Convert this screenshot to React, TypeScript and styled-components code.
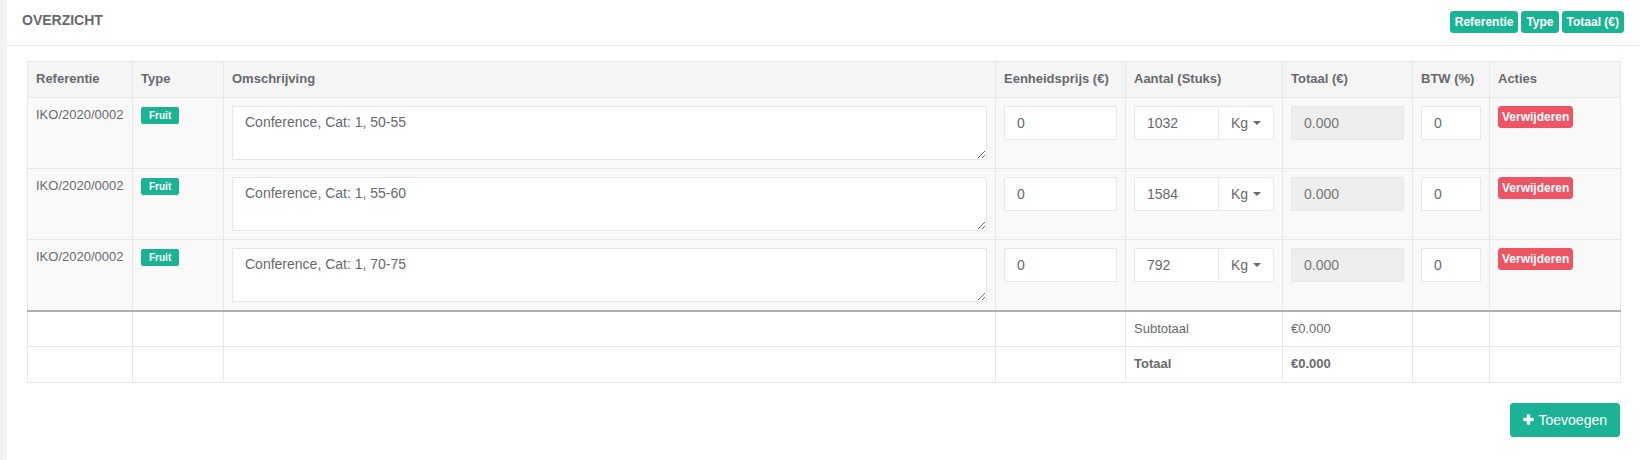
import { FC } from 'react';
import styled, { createGlobalStyle } from 'styled-components';

const GlobalStyle = createGlobalStyle`
	html, body {
		margin: 0;
		padding: 0;
		background: #f3f3f4;
	}

	body {
		font-family: 'Liberation Sans', Arial, Helvetica, sans-serif;
		font-size: 13px;
		line-height: 1.42857;
		color: #676a6c;
	}

	* {
		box-sizing: border-box;
	}
`;

const Page = styled.div`
	padding-left: 7px;
	min-height: 460px;
`;

const Panel = styled.section`
	background: #fff;
	min-height: 460px;
`;

const PanelTitle = styled.header`
	display: flex;
	align-items: center;
	justify-content: space-between;
	height: 46px;
	padding: 0 16px 1px 15px;
	border-bottom: 1px solid #e7eaec;

	h5 {
		margin: 0 0 2px;
		font-size: 14px;
		font-weight: bold;
		text-transform: uppercase;
		color: #676a6c;
	}
`;

const Tools = styled.div`
	display: flex;
	gap: 3px;
`;

const Button = styled.button<{ $variant?: 'primary' | 'danger'; $size?: 'xs' | 'md' }>`
	display: inline-flex;
	align-items: center;
	gap: 5px;
	border: 1px solid ${({ $variant }) => ($variant === 'danger' ? '#ed5565' : '#1ab394')};
	background: ${({ $variant }) => ($variant === 'danger' ? '#ed5565' : '#1ab394')};
	color: #fff;
	border-radius: 3px;
	font-family: inherit;
	cursor: pointer;
	font-size: ${({ $size }) => ($size === 'md' ? '14px' : '12px')};
	font-weight: ${({ $size }) => ($size === 'md' ? 'normal' : 'bold')};
	line-height: ${({ $size }) => ($size === 'md' ? '20px' : '18px')};
	padding: ${({ $size, $variant }) =>
		$size === 'md' ? '6px 12px' : $variant === 'danger' ? '1px 3px' : '1px 4px'};
`;

const Content = styled.div`
	padding: 15px 20px 20px;
`;

const Table = styled.table`
	width: 100%;
	border-collapse: collapse;
	table-layout: fixed;
	margin-bottom: 20px;

	th,
	td {
		border: 1px solid #e7e7e7;
		padding: 8px;
		text-align: left;
		vertical-align: top;
	}

	th {
		background: #f5f5f6;
		font-weight: bold;
	}

	tbody td {
		background: #f9f9f9;
	}

	tfoot td {
		background: #fff;
	}

	tfoot tr:first-child td {
		border-top: 2px solid #aeb0b2;
	}
`;

const Col = styled.col<{ $w: number }>`
	width: ${({ $w }) => $w}px;
`;

const Label = styled.span`
	display: inline-block;
	background: #1ab394;
	color: #fff;
	font-size: 10px;
	font-weight: bold;
	line-height: 11px;
	padding: 3px 8px;
	border-radius: 2px;
	margin-top: 1px;
`;

const TextArea = styled.textarea`
	display: block;
	width: 100%;
	height: 54px;
	padding: 6px 12px;
	border: 1px solid #e5e6e7;
	border-radius: 1px;
	font-family: inherit;
	font-size: 14px;
	line-height: 1.42857;
	color: #676a6c;
	background: #fff;
	outline: none;
`;

const Input = styled.input`
	display: block;
	width: 100%;
	height: 34px;
	padding: 6px 12px;
	border: 1px solid #e5e6e7;
	border-radius: 1px;
	font-family: inherit;
	font-size: 14px;
	color: #676a6c;
	background: #fff;
	outline: none;

	&:disabled {
		background: #eee;
		color: #777;
	}
`;

const InputGroup = styled.div`
	display: flex;

	input {
		flex: 1;
		min-width: 0;
	}
`;

const Addon = styled.button`
	display: flex;
	align-items: center;
	gap: 5px;
	height: 34px;
	padding: 6px 12px;
	border: 1px solid #e7eaec;
	border-left: none;
	border-radius: 0 3px 3px 0;
	background: #fff;
	font-family: inherit;
	font-size: 14px;
	color: #676a6c;
`;

const Caret = styled.span`
	width: 0;
	height: 0;
	border-top: 4px solid #676a6c;
	border-left: 4px solid transparent;
	border-right: 4px solid transparent;
`;

const Actions = styled.div`
	display: flex;
	justify-content: flex-end;

	button {
		gap: 4px;
	}
`;

const PlusIcon: FC = () => (
	<svg width="11" height="11" viewBox="0 0 11 11" aria-hidden="true">
		<rect x="3.8" y="0.3" width="3.4" height="10.4" fill="#fff" />
		<rect x="0.3" y="3.8" width="10.4" height="3.4" fill="#fff" />
	</svg>
);

const rows = [
	{ ref: 'IKO/2020/0002', desc: 'Conference, Cat: 1, 50-55', qty: '1032' },
	{ ref: 'IKO/2020/0002', desc: 'Conference, Cat: 1, 55-60', qty: '1584' },
	{ ref: 'IKO/2020/0002', desc: 'Conference, Cat: 1, 70-75', qty: '792' },
];

const widths = [105, 91, 772, 130, 157, 130, 77, 131];

const App: FC = () => {
	return (
		<>
			<GlobalStyle />
			<Page>
				<Panel>
					<PanelTitle>
						<h5>Overzicht</h5>
						<Tools>
							<Button $variant="primary">Referentie</Button>
							<Button $variant="primary">Type</Button>
							<Button $variant="primary">Totaal (€)</Button>
						</Tools>
					</PanelTitle>

					<Content>
						<Table>
							<colgroup>
								{widths.map((w, i) => (
									<Col key={i} $w={w} />
								))}
							</colgroup>
							<thead>
								<tr>
									<th>Referentie</th>
									<th>Type</th>
									<th>Omschrijving</th>
									<th>Eenheidsprijs (€)</th>
									<th>Aantal (Stuks)</th>
									<th>Totaal (€)</th>
									<th>BTW (%)</th>
									<th>Acties</th>
								</tr>
							</thead>
							<tbody>
								{rows.map((row, i) => (
									<tr key={i}>
										<td>{row.ref}</td>
										<td>
											<Label>Fruit</Label>
										</td>
										<td>
											<TextArea rows={2} defaultValue={row.desc} />
										</td>
										<td>
											<Input defaultValue="0" />
										</td>
										<td>
											<InputGroup>
												<Input defaultValue={row.qty} />
												<Addon>
													Kg <Caret />
												</Addon>
											</InputGroup>
										</td>
										<td>
											<Input disabled value="0.000" readOnly />
										</td>
										<td>
											<Input defaultValue="0" />
										</td>
										<td>
											<Button $variant="danger">Verwijderen</Button>
										</td>
									</tr>
								))}
							</tbody>
							<tfoot>
								<tr>
									<td />
									<td />
									<td />
									<td />
									<td>Subtotaal</td>
									<td>€0.000</td>
									<td />
									<td />
								</tr>
								<tr>
									<td />
									<td />
									<td />
									<td />
									<td>
										<b>Totaal</b>
									</td>
									<td>
										<b>€0.000</b>
									</td>
									<td />
									<td />
								</tr>
							</tfoot>
						</Table>

						<Actions>
							<Button $variant="primary" $size="md">
								<PlusIcon />
								Toevoegen
							</Button>
						</Actions>
					</Content>
				</Panel>
			</Page>
		</>
	);
};

export default App;
